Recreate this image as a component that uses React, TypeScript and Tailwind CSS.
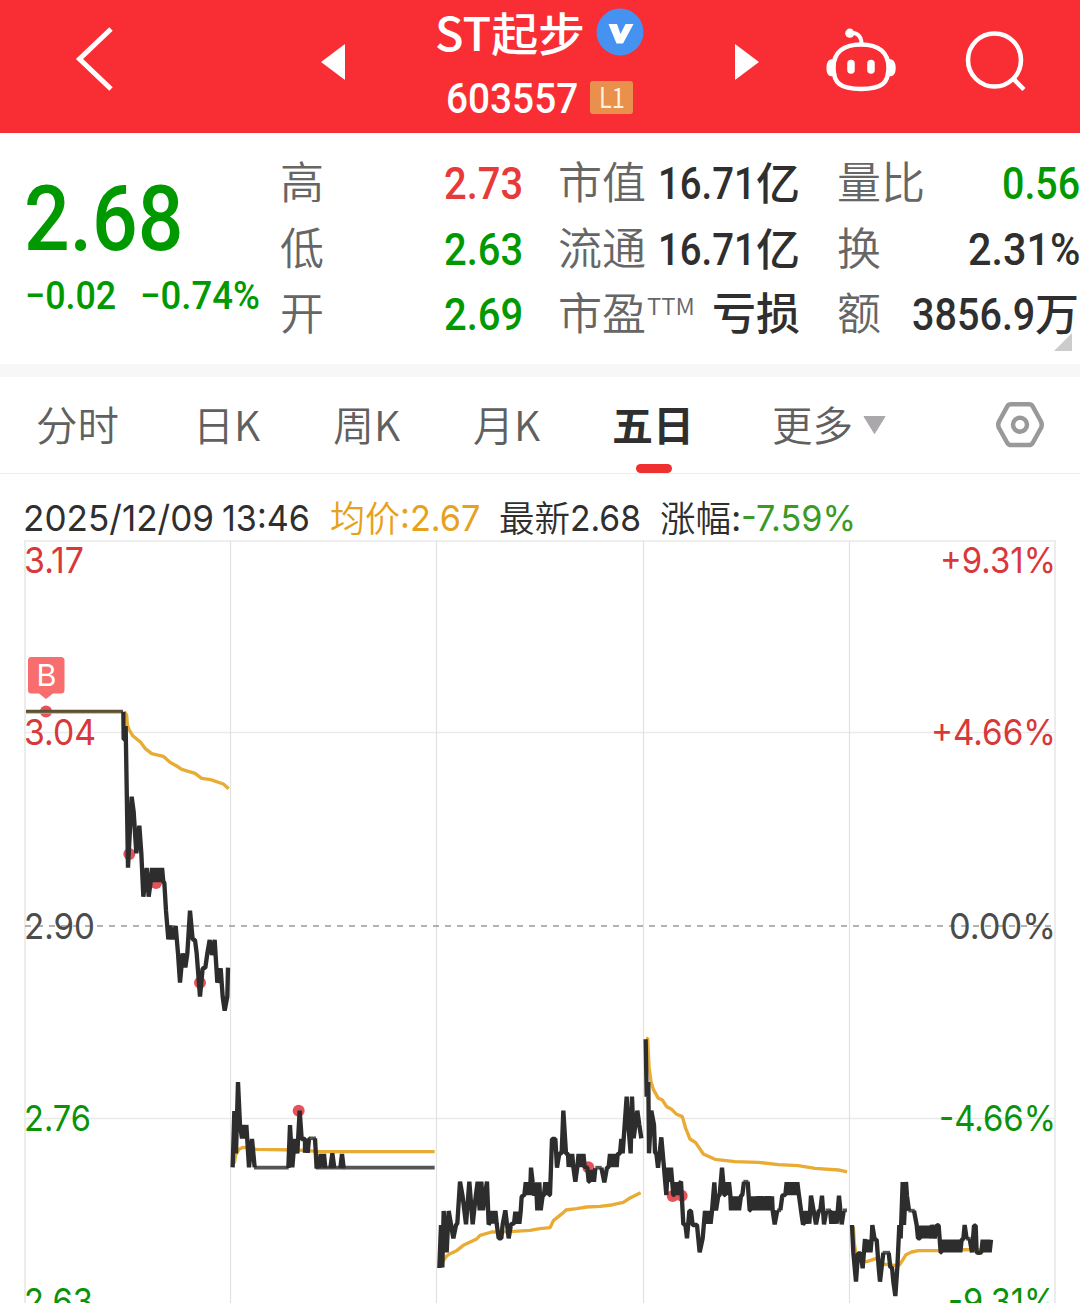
import { useLayoutEffect, useRef, type ReactNode } from "react";

const DIN = "font-['Roboto','Noto_Sans_CJK_SC',sans-serif] font-medium";
const CJK = "font-['Noto_Sans_CJK_SC',sans-serif]";
const MI = "font-['Inter','Noto_Sans_CJK_SC',sans-serif]";

/* A single line of text that is condensed or widened to fill its box. */
function Fit({ className, children }: { className: string; children: ReactNode }) {
  const box = useRef<HTMLSpanElement>(null);
  const inner = useRef<HTMLSpanElement>(null);
  useLayoutEffect(() => {
    const apply = () => {
      if (!box.current || !inner.current) return;
      const k = box.current.offsetWidth / inner.current.offsetWidth;
      inner.current.style.transform = `scaleX(${k})`;
    };
    apply();
    document.fonts?.ready.then(apply);
  }, []);
  return (
    <span ref={box} className={`block shrink-0 whitespace-nowrap ${className}`}>
      <span ref={inner} className="inline-block origin-left">{children}</span>
    </span>
  );
}

function Header() {
  return (
    <header className="flex h-[133px] bg-[#f92e34] text-white">
      <svg className="ml-[70px] mt-[20px] h-[80px] w-[50px] shrink-0" viewBox="70 20 50 80" fill="none" stroke="#fff" strokeWidth="5">
        <path d="M111 29 79.500 59 111 89" />
      </svg>
      <svg className="ml-[201px] mt-[44px] h-[36px] w-[24px] shrink-0" viewBox="0 0 24 36">
        <path d="M0 18 24 0V36Z" fill="#fff" />
      </svg>
      <div className="ml-[90px] w-[210px] shrink-0">
        <div className="flex h-[66px]">
          <Fit className={`w-[150px] ${CJK} text-[46px] font-medium leading-[62px]`}>ST起步</Fit>
          <svg className="ml-[11px] mt-[8px] h-[48px] w-[48px]" viewBox="0 0 48 48">
            <circle cx="24" cy="24" r="23.500" fill="#4592f0" />
            <path d="M12.500 16h8.500l3.500 10 5-10h8L27 35.500H20.500Z" fill="#fff" />
          </svg>
        </div>
        <div className="flex h-[66px]">
          <Fit className={`ml-[11px] w-[132px] ${DIN} text-[42px] leading-[66px]`}>603557</Fit>
          <div className="ml-[12px] mt-[15px] flex h-[33px] w-[43px] justify-center rounded-[3px] bg-[#e8904c]">
            <Fit className={`w-[26px] ${CJK} text-[28px] leading-[31px] text-[#fff3df]`}>L1</Fit>
          </div>
        </div>
      </div>
      <svg className="ml-[90px] mt-[44px] h-[36px] w-[24px] shrink-0" viewBox="0 0 24 36">
        <path d="M24 18 0 0V36Z" fill="#fff" />
      </svg>
      <svg className="ml-[61px] mt-[20px] h-[80px] w-[80px] shrink-0" viewBox="820 20 80 80" fill="none" stroke="#fff">
        <path d="M861 44.500C879 44.500 888.500 53 888.500 67.500 888.500 83 882 89 861 89S833.500 83 833.500 67.500C833.500 53 843 44.500 861 44.500Z" strokeWidth="4.500" />
        <path d="M849.500 33.500C856 32 861 35 861.500 43" strokeWidth="4" />
        <circle cx="849.800" cy="33.200" r="4.600" fill="#fff" stroke="none" />
        <path d="M833 59C828 59 826.500 63 826.500 68S828 76.500 833 76.500ZM889 59C894 59 895.700 63 895.700 68S894 76.500 889 76.500Z" fill="#fff" stroke="none" />
        <path d="M851 63.500v6.500M871 63.500v6.500" strokeWidth="7.500" strokeLinecap="round" />
      </svg>
      <svg className="ml-[60px] mt-[20px] h-[80px] w-[80px] shrink-0" viewBox="960 20 80 80" fill="none" stroke="#fff" strokeWidth="4.500">
        <circle cx="994.500" cy="60" r="26.500" />
        <path d="M1013.500 79 1024 89.500" />
      </svg>
    </header>
  );
}

const label = `${CJK} -translate-y-[3px] text-[44px] font-[350] leading-[65.500px] text-[#666]`;
const value = `${DIN} text-[45px] leading-[65.500px]`;
const unit = `${CJK} -translate-y-[2px] text-[44px]`;

function Quote() {
  return (
    <section className="relative flex h-[231px] bg-white pt-[18px] text-[#2f2f2f]">
      <div className="w-[280px] shrink-0 text-[#009900]">
        <Fit className={`ml-[24px] mt-[16px] w-[159px] ${DIN} text-[90px] leading-[106px]`}>2.68</Fit>
        <div className="flex">
          <Fit className={`ml-[25px] w-[91px] ${DIN} text-[39px] leading-[46px]`}>−0.02</Fit>
          <Fit className={`ml-[24px] w-[120px] ${DIN} text-[39px] leading-[46px]`}>−0.74%</Fit>
        </div>
      </div>
      <div className="flex w-[243px] shrink-0 justify-between">
        <div className={label}><p>高</p><p>低</p><p>开</p></div>
        <div className={value}>
          <Fit className="w-[79px] text-[#e73a3a]">2.73</Fit>
          <Fit className="w-[79px] text-[#009900]">2.63</Fit>
          <Fit className="w-[79px] text-[#009900]">2.69</Fit>
        </div>
      </div>
      <div className="ml-[35px] w-[242px] shrink-0">
        <div className="flex justify-between">
          <span className={label}>市值</span>
          <div className={`${value} flex`}><Fit className="w-[98px]">16.71</Fit><span className={unit}>亿</span></div>
        </div>
        <div className="flex justify-between">
          <span className={label}>流通</span>
          <div className={`${value} flex`}><Fit className="w-[98px]">16.71</Fit><span className={unit}>亿</span></div>
        </div>
        <div className="flex">
          <span className={label}>市盈</span>
          <Fit className={`ml-[1px] mt-[6px] w-[48px] ${CJK} text-[23px] font-[350] leading-[34px] text-[#666]`}>TTM</Fit>
          <span className={`ml-auto -translate-y-[3px] ${CJK} text-[44px] font-medium leading-[65.500px]`}>亏损</span>
        </div>
      </div>
      <div className="ml-[37px] w-[243px] shrink-0">
        <div className="flex justify-between">
          <span className={label}>量比</span>
          <Fit className={`${value} w-[78px] text-[#009900]`}>0.56</Fit>
        </div>
        <div className="flex justify-between">
          <span className={label}>换</span>
          <Fit className={`${value} w-[112px]`}>2.31%</Fit>
        </div>
        <div className="flex">
          <span className={label}>额</span>
          <div className={`${value} ml-auto mr-[1px] flex`}><Fit className="w-[123px]">3856.9</Fit><span className={unit}>万</span></div>
        </div>
      </div>
      <svg className="absolute bottom-[13px] right-[8px] h-[18px] w-[18px]" viewBox="0 0 18 18">
        <path d="M18 0V18H0Z" fill="#ccc" />
      </svg>
    </section>
  );
}

function Tabs() {
  const tab = `${CJK} text-[41px] font-[350] leading-[92px] text-[#606060]`;
  return (
    <nav className="flex h-[97px] shrink-0 border-b border-[#ececec] bg-white">
      <Fit className={`ml-[36px] w-[83px] ${tab}`}>分时</Fit>
      <Fit className={`ml-[74px] w-[67px] ${tab}`}>日K</Fit>
      <Fit className={`ml-[73px] w-[67px] ${tab}`}>周K</Fit>
      <Fit className={`ml-[73px] w-[67px] ${tab}`}>月K</Fit>
      <div className="relative ml-[72px] w-[82px] text-[#2f2f2f]">
        <Fit className={`w-[82px] ${CJK} text-[41px] font-bold leading-[92px]`}>五日</Fit>
        <span className="absolute bottom-0 left-[24px] h-[9px] w-[36px] rounded-full bg-[#ee3030]" />
      </div>
      <Fit className={`ml-[78px] w-[81px] ${tab}`}>更多</Fit>
      <svg className="ml-[10px] mt-[38px] h-[20px] w-[23px]" viewBox="0 0 23 20">
        <path d="M1 1.500H22L11.500 18.500Z" fill="#aaa8aa" stroke="#aaa8aa" strokeLinejoin="round" />
      </svg>
      <svg className="ml-[109px] mt-[23px] h-[50px] w-[50px]" viewBox="995 400 50 50" fill="none" stroke="#999" strokeWidth="4.500" strokeLinejoin="round">
        <path d="M1011 404.300H1029Q1031.500 404.300 1032.700 406.400L1041 421.500Q1042.500 424.700 1041 428L1032.700 443Q1031.500 445 1029 445H1011Q1008.500 445 1007.300 443L999 428Q997.500 424.700 999 421.500L1007.300 406.400Q1008.500 404.300 1011 404.300Z" />
        <circle cx="1020" cy="424.700" r="7" />
      </svg>
    </nav>
  );
}

function InfoLine() {
  const t = `${MI} text-[36px] font-normal leading-[49px]`;
  const c = `${CJK} text-[36px] font-[350] leading-[45px]`;
  return (
    <div className="flex h-[66px] bg-white pt-[20px] text-[#2f2f2f]">
      <Fit className={`ml-[23px] w-[191px] ${t}`}>2025/12/09</Fit>
      <Fit className={`ml-[8px] w-[88px] ${t}`}>13:46</Fit>
      <Fit className={`ml-[20px] w-[70px] text-[#e6a11d] ${c}`}>均价</Fit>
      <Fit className={`w-[80px] text-[#e6a11d] ${t}`}>:2.67</Fit>
      <Fit className={`ml-[19px] w-[71px] ${c}`}>最新</Fit>
      <Fit className={`w-[71px] ${t}`}>2.68</Fit>
      <Fit className={`ml-[19px] w-[71px] ${c}`}>涨幅</Fit>
      <Fit className={`w-[10px] ${t}`}>:</Fit>
      <Fit className={`w-[115px] text-[#3a9a28] ${t}`}>-7.59%</Fit>
    </div>
  );
}

/* Rapid ticks between two neighbouring prices. */
function ticks(x0: number, x1: number, top: number, bottom: number) {
  const n = Math.max(2, Math.round((x1 - x0) / 4));
  let s = "";
  for (let i = 0; i <= n; i++) {
    s += ` ${(x0 + ((x1 - x0) * i) / n).toFixed(1)},${i % 2 ? top : bottom}`;
  }
  return s + " ";
}

type Day = { x: number; y: number; price: string[]; flat: string[]; avg: string; dots: [number, number][] };

const days: Day[] = [
  {
    x: 10, y: 640,
    price: [
      "340,215 341,298 346,298 347,258 354,683 365,470 371,515 379,640 388,557 394,640 400,770 410,684 416,770 " +
        ticks(422, 460, 684, 726) + "463,728 468,812 475,898 481,857 488,898 497,858 504,940 510,1028 518,940 526,982 532,940 540,812 548,898 555,900 560,940 570,1070 578,985 586,983 592,940 599,900 606,945 614,900 622,1028 632,985 638,1070 644,1112 652,1070 654,983",
    ],
    flat: [],
    avg: "343,215 350,225 352,255 358,270 368,287 392,307 405,325 425,341 460,349 480,367 500,378 515,388 555,400 575,415 602,419 640,432 656,446",
    dots: [[358, 642], [438, 729], [570, 1028]],
  },
  {
    x: 220, y: 1060,
    price: [
      "38,322 43,153 48,280 54,66 60,195 66,235 71,195 77,235 79,195 87,322 96,237 104,322",
      "205,324 210,195 217,322 224,237 232,280 239,152 245,237 255,237 " + ticks(255, 267, 237, 278) + "269,237",
      "285,235 290,326",
      "296,324 302,282 307,322 312,282 316,324",
      "331,324 337,280 343,324",
      "361,324 366,282 371,324",
    ],
    flat: ["102,323 206,323", "267,235 288,235", "288,323 374,323", "370,323 644,323"],
    avg: "43,310 47,285 57,268 70,262 85,264 110,268 230,270 260,272 300,275 644,275",
    dots: [[236, 152]],
  },
  {
    x: 430, y: 1020,
    price: [
      "28,744 33,615 37,742 41,573 50,697 56,573 63,613 70,655 78,615 82,610 90,485 98,530 108,613 118,485 128,613 137,530 143,485 149,571 154,485 159,571 164,530 171,485 176,613 " +
        ticks(178, 200, 573, 611) + "206,655 214,655 218,613 226,571 236,655 243,613 249,611 " + ticks(252, 272, 575, 611) +
        "275,530 " + ticks(283, 300, 487, 525) + "303,443 308,487 313,527 318,487 322,571 328,487 332,571 338,527 " + ticks(342, 358, 487, 525) +
        "360,525 366,357 376,357 381,443 388,400 395,400 400,272 408,400 414,402 " + ticks(416, 430, 402, 441) + "436,485 " + ticks(442, 464, 402, 441) +
        "472,443 476,485 " + ticks(478, 492, 450, 485) + "496,445",
      "514,443 523,487 531,443 " + ticks(536, 560, 402, 441) + "563,402 570,400 574,357 578,400 584,315 590,230 595,315 602,400 606,230 611,355 622,272 628,315 634,355",
    ],
    flat: ["496,443 515,443"],
    avg: "33,742 40,722 50,708 60,701 80,692 100,676 140,657 150,646 185,636 240,635 300,631 330,626 360,623 370,602 385,590 400,578 408,570 440,566 470,561 510,559 545,555 580,547 600,534 632,518",
    dots: [[475, 442]],
  },
  {
    x: 635, y: 1020,
    price: [
      "32,58 35,230 40,186 42,400 49,272 57,315 60,398 64,400 69,443 79,352 88,455 94,525 98,443 103,485 108,443 115,525 " + ticks(117, 136, 487, 525) +
        "138,485 145,613 151,613 156,655 163,573 168,573 173,615 186,615 194,697 203,655 210,573 " + ticks(210, 231, 573, 611) +
        "238,487 243,571 250,527 254,525 261,443 268,525 " + ticks(270, 286, 487, 525) + ticks(288, 312, 529, 571) + "318,527 322,525 327,485",
      "338,485 344,571 " + ticks(346, 361, 529, 571) + "364,530 " + ticks(366, 411, 529, 571) + "413,571 419,613 427,571",
      "436,571 442,527 448,525 " + ticks(451, 487, 487, 525) + "492,527 498,571 504,613 " + ticks(506, 523, 573, 611) +
        "528,527 536,573 543,613 551,573 556,571 561,527 567,613 574,573",
      "585,571 " + ticks(589, 605, 573, 611) + "612,527 620,613 626,573",
    ],
    flat: ["325,485 340,485", "426,571 438,571", "572,571 588,571", "624,571 636,571"],
    avg: "33,55 38,55 42,140 48,185 55,208 70,235 82,240 95,260 110,268 125,283 142,290 152,325 165,357 182,368 205,402 240,418 300,425 370,427 430,434 490,437 540,445 610,450 636,456",
    dots: [[113, 528], [140, 527]],
  },
  {
    x: 840, y: 1160,
    price: [
      "36,195 40,278 48,365 54,280 62,280 68,325 75,237 " + ticks(77, 95, 239, 277) + "97,195 104,239 110,239 116,322 120,365 130,278",
      "146,278 151,322 156,322 160,365 166,408 172,322 178,195 182,235 188,66 192,195 198,66 201,108 207,152",
      "222,152 230,195 234,235 " + ticks(240, 270, 197, 235) + "276,195 284,235 290,195 296,197 302,277 " + ticks(304, 365, 239, 277) +
        "370,237 374,195 380,237",
      "389,237 396,277 402,197 407,197 410,277 417,279 " + ticks(424, 453, 239, 277),
    ],
    flat: ["128,278 150,278", "205,152 224,152", "378,236 392,236"],
    avg: "40,200 43,250 50,300 80,305 110,295 125,312 165,316 178,315 188,300 198,284 215,276 235,272 300,272 370,269 455,270",
    dots: [],
  },
];

const axis: [string, number, number, string][] = [
  ["3.17", 572.5, 60, "#d8383a"], ["3.04", 744.5, 72, "#d8383a"], ["2.90", 938.5, 71, "#4c4c4c"], ["2.76", 1130.5, 67, "#0a930a"], ["2.63", 1313.5, 69, "#0a930a"],
];
const axisRight: [string, number, number, string][] = [
  ["+9.31%", 572.5, 116, "#d8383a"], ["+4.66%", 744.5, 125, "#d8383a"], ["0.00%", 938.5, 107, "#4c4c4c"], ["-4.66%", 1130.5, 117, "#0a930a"], ["-9.31%", 1313.5, 108, "#0a930a"],
];

function Chart() {
  return (
    <svg className={`block h-[763px] w-[1080px] overflow-visible ${MI}`} viewBox="0 540 1080 763" fill="none">
      <path d="M24 541H1056M24 732.500H1056M24 1118.500H1056" stroke="#e9e9e9" strokeWidth="1.500" />
      <path d="M25 541V1303M1055 541V1303" stroke="#ececec" strokeWidth="2" />
      <path d="M230.500 541V1303M436.500 541V1303M643.500 541V1303M849.500 541V1303" stroke="#e2e2e2" strokeWidth="1.200" />
      <path d="M25 926H1055" stroke="#999" strokeWidth="1.600" strokeDasharray="6 6" />
      {axis.map(([t, y, w, c]) => (
        <text key={t} x="24" y={y} fill={c} fontSize="35.500" textLength={w} lengthAdjust="spacingAndGlyphs">{t}</text>
      ))}
      {axisRight.map(([t, y, w, c]) => (
        <text key={t} x={1056 - w} y={y} fill={c} fontSize="35.500" textLength={w} lengthAdjust="spacingAndGlyphs">{t}</text>
      ))}
      <circle cx="46" cy="711.500" r="6" fill="#e4535a" />
      <path d="M26 711.500H123" stroke="#5c5136" strokeWidth="3.600" />
      <path d="M26 713.300H123" stroke="#d9b565" strokeWidth="0.800" />
      <path d="M31 657H61Q64.500 657 64.500 660.500V690Q64.500 693.500 61 693.500H53L46 699 39 693.500H31Q28 693.500 28 690V660.500Q28 657 31 657Z" fill="#f86d6d" />
      <text x="46.500" y="686" fill="#fff" fontSize="30" textAnchor="middle" textLength="20" lengthAdjust="spacingAndGlyphs">B</text>
      {days.map((d) => (
        <g key={d.x} transform={`translate(${d.x} ${d.y}) scale(0.33333)`} strokeLinejoin="bevel">
          {d.dots.map(([x, y]) => <circle key={x} cx={x} cy={y} r="18" fill="#e4535a" />)}
          <polyline points={d.avg} stroke="#e8ab33" strokeWidth="10" />
          {d.flat.map((p) => <polyline key={p} points={p} stroke="#555" strokeWidth="11" />)}
          {d.price.map((p) => <polyline key={p} points={p} stroke="#2d2d2d" strokeWidth="13" />)}
        </g>
      ))}
    </svg>
  );
}

export default function App() {
  return (
    <main className="h-[1303px] w-[1080px] overflow-hidden bg-white">
      <Header />
      <Quote />
      <div className="h-[13px] bg-[#f7f7f7]" />
      <Tabs />
      <InfoLine />
      <Chart />
    </main>
  );
}
